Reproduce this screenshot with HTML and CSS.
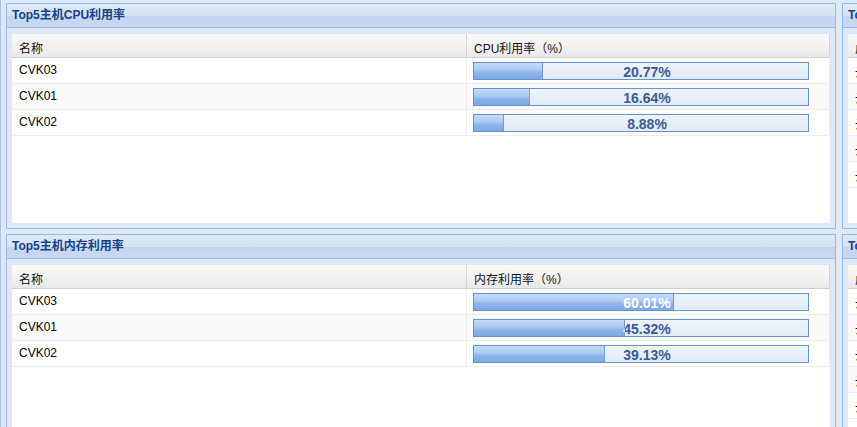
FILE: index.html
```html
<!DOCTYPE html>
<html lang="zh-CN">
<head>
<meta charset="utf-8">
<title>Top5</title>
<link rel="stylesheet" href="styles.css">
</head>
<body>
<div class="page">
  <div class="col">
    <section class="panel">
      <div class="panel-header">Top5主机CPU利用率</div>
      <div class="panel-body">
        <div class="grid">
          <div class="grid-head"><div class="hcell c1">名称</div><div class="hcell c2">CPU利用率（%）</div></div>
          <div class="grid-row"><div class="cell c1">CVK03</div><div class="cell c2"><div class="bar"><div class="bar-text">20.77%</div><div class="bar-fill" style="width:20.77%"><div class="bar-text inner">20.77%</div></div></div></div></div>
          <div class="grid-row alt"><div class="cell c1">CVK01</div><div class="cell c2"><div class="bar"><div class="bar-text">16.64%</div><div class="bar-fill" style="width:16.64%"><div class="bar-text inner">16.64%</div></div></div></div></div>
          <div class="grid-row"><div class="cell c1">CVK02</div><div class="cell c2"><div class="bar"><div class="bar-text">8.88%</div><div class="bar-fill" style="width:8.88%"><div class="bar-text inner">8.88%</div></div></div></div></div>
        </div>
      </div>
    </section>
    <section class="panel">
      <div class="panel-header">Top5主机内存利用率</div>
      <div class="panel-body">
        <div class="grid">
          <div class="grid-head"><div class="hcell c1">名称</div><div class="hcell c2">内存利用率（%）</div></div>
          <div class="grid-row"><div class="cell c1">CVK03</div><div class="cell c2"><div class="bar"><div class="bar-text">60.01%</div><div class="bar-fill" style="width:60.01%"><div class="bar-text inner">60.01%</div></div></div></div></div>
          <div class="grid-row alt"><div class="cell c1">CVK01</div><div class="cell c2"><div class="bar"><div class="bar-text">45.32%</div><div class="bar-fill" style="width:45.32%"><div class="bar-text inner">45.32%</div></div></div></div></div>
          <div class="grid-row"><div class="cell c1">CVK02</div><div class="cell c2"><div class="bar"><div class="bar-text">39.13%</div><div class="bar-fill" style="width:39.13%"><div class="bar-text inner">39.13%</div></div></div></div></div>
        </div>
      </div>
    </section>
  </div>
  <div class="col">
    <section class="panel">
      <div class="panel-header">Top5虚拟机CPU利用率</div>
      <div class="panel-body">
        <div class="grid">
          <div class="grid-head"><div class="hcell c1">虚拟机名称</div><div class="hcell c2">CPU利用率（%）</div></div>
          <div class="grid-row"><div class="cell c1">云主机03</div><div class="cell c2"></div></div>
          <div class="grid-row alt"><div class="cell c1">云主机07</div><div class="cell c2"></div></div>
          <div class="grid-row"><div class="cell c1">云主机01</div><div class="cell c2"></div></div>
          <div class="grid-row alt"><div class="cell c1">云主机05</div><div class="cell c2"></div></div>
          <div class="grid-row"><div class="cell c1">云主机02</div><div class="cell c2"></div></div>
        </div>
      </div>
    </section>
    <section class="panel">
      <div class="panel-header">Top5虚拟机内存利用率</div>
      <div class="panel-body">
        <div class="grid">
          <div class="grid-head"><div class="hcell c1">虚拟机名称</div><div class="hcell c2">内存利用率（%）</div></div>
          <div class="grid-row"><div class="cell c1">云主机03</div><div class="cell c2"></div></div>
          <div class="grid-row alt"><div class="cell c1">云主机07</div><div class="cell c2"></div></div>
          <div class="grid-row"><div class="cell c1">云主机01</div><div class="cell c2"></div></div>
          <div class="grid-row alt"><div class="cell c1">云主机05</div><div class="cell c2"></div></div>
          <div class="grid-row"><div class="cell c1">云主机02</div><div class="cell c2"></div></div>
        </div>
      </div>
    </section>
  </div>
</div>
</body>
</html>
```
FILE: styles.css
```css
html, body {
  margin: 0;
  padding: 0;
  overflow: hidden;
  background: #dfe8f6;
}
body {
  font-family: "Liberation Sans", Arial, "Noto Sans CJK SC", sans-serif;
  font-size: 12px;
  color: #000;
}
.page {
  display: flex;
  gap: 6px;
  padding: 3px 0 0 5px;
  border-left: 1px solid #a9c4ea;
  width: 1800px;
  height: 460px;
}
.col {
  display: flex;
  flex-direction: column;
  gap: 5px;
  width: 830px;
  flex: none;
}
.panel {
  border: 1px solid #99bbe8;
  height: 224px;
  display: flex;
  flex-direction: column;
  background: #dfe8f6;
}
.panel-header {
  height: 23px;
  line-height: 22px;
  border-bottom: 1px solid #99bbe8;
  padding-left: 5px;
  font-weight: bold;
  font-size: 12px;
  color: #15428b;
  background: linear-gradient(#e0eaf6 0%, #d5e2f3 50%, #c2d5ef 51%, #c8d9f0 100%);
  white-space: nowrap;
}
.panel-body {
  flex: 1;
  padding: 6px 5px 5px 5px;
  display: flex;
}
.grid {
  flex: 1;
  background: #fff;
}
.grid-head {
  display: flex;
  height: 23px;
  border-bottom: 1px solid #d0d0d0;
  background: linear-gradient(#fafafa, #f1f1f1 60%, #e8e8e8);
}
.hcell {
  padding: 5px 0 0 7px;
  box-sizing: border-box;
  border-right: 1px solid #d6d6d6;
  white-space: nowrap;
  color: #111;
}
.c1 { width: 455px; }
.c2 { width: 363px; padding-left: 6px; }
.hcell.c2 { padding-left: 7px; }
.grid-row {
  display: flex;
  height: 25px;
  border-bottom: 1px solid #ededed;
}
.grid-row.alt { background: #fafafa; }
.cell {
  box-sizing: border-box;
  border-right: 1px solid #ededed;
  padding-left: 7px;
  padding-top: 4px;
  white-space: nowrap;
}
.cell.c1 { padding-top: 5px; }
.cell.c2 { padding-left: 6px; }
.bar {
  position: relative;
  width: 334px;
  height: 16px;
  border: 1px solid #6593cf;
  background: linear-gradient(#eef3fa, #e2eaf5);
}
.bar-text {
  position: absolute;
  left: 0;
  top: 0;
  width: 334px;
  height: 16px;
  padding-left: 12px;
  box-sizing: border-box;
  line-height: 18px;
  text-align: center;
  font-weight: bold;
  font-size: 14px;
  color: #3c5b91;
}
.bar-fill {
  position: absolute;
  left: 0;
  top: 0;
  bottom: 0;
  overflow: hidden;
  background: linear-gradient(#c6dcf9 0%, #a9c9f3 45%, #8db5ea 60%, #7ea8e2 100%);
  box-shadow: inset -1px 0 0 #6f9bd8;
}
.bar-text.inner {
  color: #fff;
}
```
